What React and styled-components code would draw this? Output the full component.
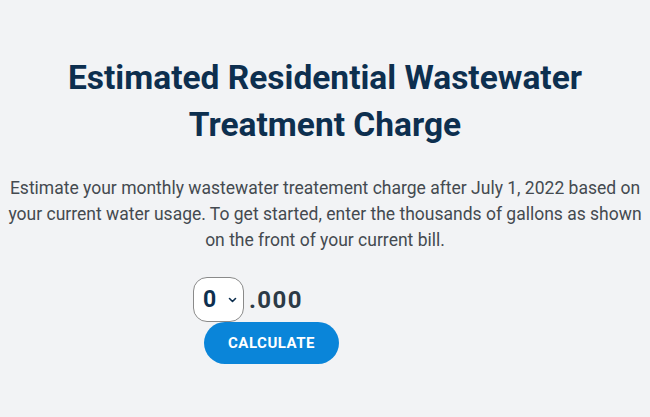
import React, { useState } from "react";
import styled, { createGlobalStyle } from "styled-components";

const Global = createGlobalStyle`
  html, body { margin: 0; padding: 0; background: #f2f3f5; }
  body { font-family: "Roboto", "Liberation Sans", sans-serif; }
`;

const Page = styled.main`
  min-height: 417px;
  box-sizing: border-box;
  padding: 54px 0 0;
  display: flex;
  flex-direction: column;
  align-items: center;
`;

const Title = styled.h1`
  margin: 0;
  font-family: "Roboto", "Liberation Sans", sans-serif;
  font-weight: 700;
  font-size: 33.5px;
  line-height: 47px;
  color: #0d2f4f;
  text-align: center;
  max-width: 560px;
`;

const Intro = styled.p`
  margin: 27px 0 0;
  padding: 0 4px;
  font-family: "Roboto", "Liberation Sans", sans-serif;
  font-size: 17.5px;
  line-height: 26px;
  color: #444a50;
  text-align: center;
`;

const Form = styled.form`
  align-self: flex-start;
  margin: 24px 0 0 193px;
  display: flex;
  flex-direction: column;
  align-items: flex-start;
`;

const Amount = styled.div`
  display: flex;
  align-items: center;
  gap: 5px;
`;

const SelectWrap = styled.label`
  position: relative;
  display: inline-flex;
`;

const Select = styled.select`
  appearance: none;
  width: 51px;
  height: 45px;
  box-sizing: border-box;
  padding: 0 0 0 9px;
  border: 1px solid #8a8a8a;
  border-radius: 14px;
  background: #fff;
  font-family: "Roboto", "Liberation Sans", sans-serif;
  font-weight: 700;
  font-size: 23px;
  color: #0d2f4f;
  outline: none;
`;

const Chevron = styled.svg`
  position: absolute;
  right: 7px;
  top: 20px;
  pointer-events: none;
`;

const Suffix = styled.span`
  font-weight: 700;
  font-size: 24px;
  letter-spacing: 1.4px;
  color: #2c3a46;
`;

const Button = styled.button`
  margin: 0 0 0 11px;
  width: 135px;
  height: 42px;
  border: none;
  border-radius: 21px;
  background: #0a85d9;
  color: #fff;
  font-family: "Roboto", "Liberation Sans", sans-serif;
  font-weight: 700;
  font-size: 15px;
  letter-spacing: 0.5px;
  cursor: pointer;
`;

export default function App() {
  const [value, setValue] = useState("0");
  return (
    <>
      <Global />
      <Page>
        <Title>Estimated Residential Wastewater Treatment Charge</Title>
        <Intro>
          Estimate your monthly wastewater treatement charge after July 1, 2022 based on
          your current water usage. To get started, enter the thousands of gallons as shown
          on the front of your current bill.
        </Intro>
        <Form onSubmit={(e) => e.preventDefault()}>
          <Amount>
            <SelectWrap>
              <Select value={value} onChange={(e) => setValue(e.target.value)}>
                {Array.from({ length: 10 }, (_, i) => (
                  <option key={i} value={String(i)}>{i}</option>
                ))}
              </Select>
              <Chevron width="9" height="6" viewBox="0 0 9 6">
                <path d="M1.5 1.5 L4.5 4.5 L7.5 1.5" fill="none" stroke="#0d2f4f" strokeWidth="1.6" strokeLinecap="round" strokeLinejoin="round" />
              </Chevron>
            </SelectWrap>
            <Suffix>.000</Suffix>
          </Amount>
          <Button type="submit">CALCULATE</Button>
        </Form>
      </Page>
    </>
  );
}
